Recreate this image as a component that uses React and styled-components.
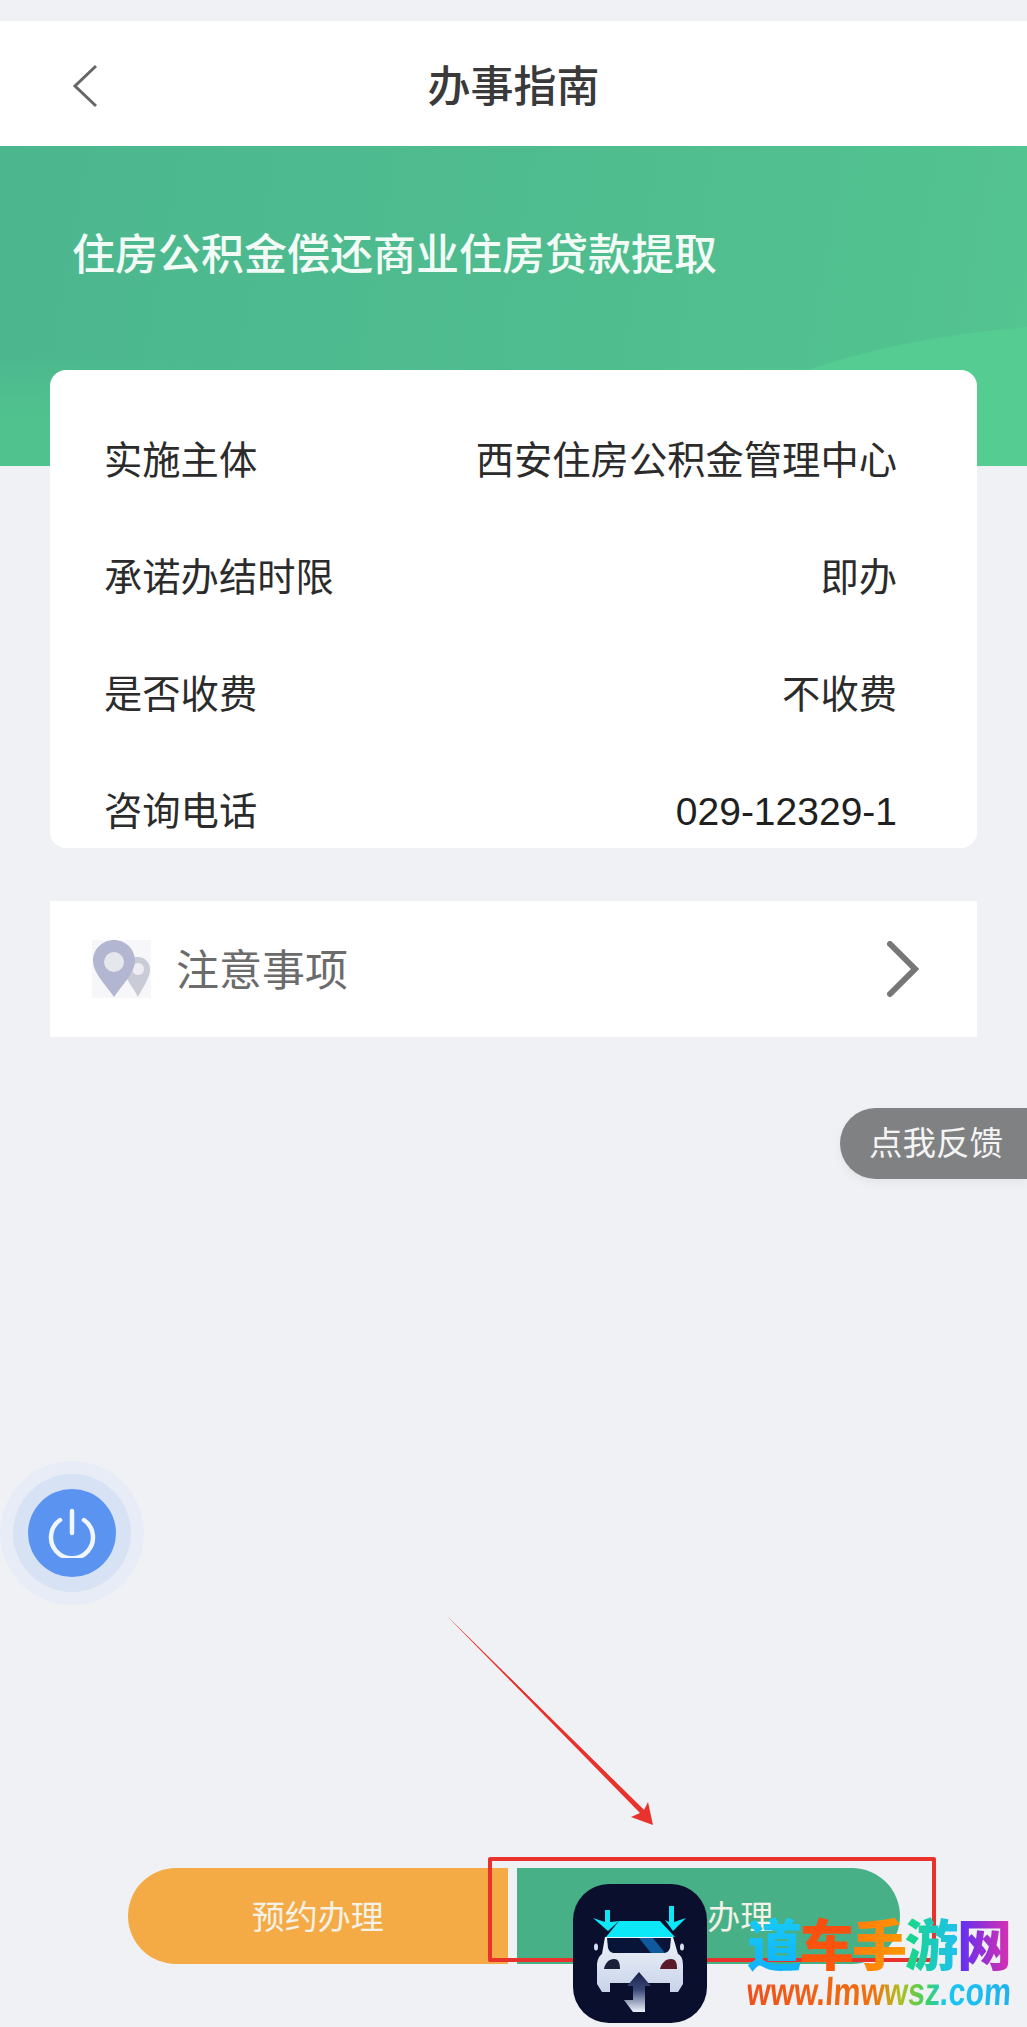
import React from 'react';
import styled, { createGlobalStyle } from 'styled-components';

const GlobalStyle = createGlobalStyle`
  html, body {
    margin: 0;
    padding: 0;
    background: #eff1f5;
  }
  * {
    box-sizing: border-box;
  }
`;

const Page = styled.div`
  position: relative;
  width: 1027px;
  height: 2027px;
  padding-top: 21px;
  overflow: hidden;
  background: #eff1f5;
  font-family: "Noto Sans CJK SC", "Liberation Sans", sans-serif;
  color: #333;
`;

// Top bar
const Header = styled.header`
  display: flex;
  align-items: center;
  justify-content: center;
  position: relative;
  height: 125px;
  background: #fff;
`;

const BackIcon = styled.svg`
  position: absolute;
  left: 72px;
  top: 43px;
`;

const Title = styled.h1`
  margin: 0;
  font-size: 43px;
  font-weight: 500;
  line-height: 1;
  color: #3a3a3a;
`;

// Green banner
const Hero = styled.section`
  height: 320px;
  padding: 82px 0 0 72px;
  background:
    radial-gradient(ellipse 460px 145px at 1150px 320px, #55cd92 99%, transparent 100%),
    radial-gradient(ellipse 480px 130px at 60px 340px, #50c28e 55%, transparent 100%),
    linear-gradient(100deg, #4cb78f 0%, #50bd8f 60%, #54c491 100%);
`;

const HeroTitle = styled.h2`
  margin: 0;
  font-size: 43px;
  font-weight: 500;
  line-height: 46px;
  color: #f2fbf6;
  white-space: nowrap;
`;

// Info card, its last row is cut off at the bottom edge
const Card = styled.section`
  height: 478px;
  margin: -96px 50px 0;
  padding: 33px 80px 0 54px;
  overflow: hidden;
  background: #fff;
  border-radius: 16px;
  position: relative;
`;

const Row = styled.div`
  display: flex;
  align-items: center;
  justify-content: space-between;
  height: 117px;
  padding-bottom: 8px;
  font-size: 38.3px;
  color: #2b2b2b;
`;

const Phone = styled.span`
  font-family: "Liberation Sans", sans-serif;
  font-size: 39px;
  color: #1f1f1f;
`;

const Notice = styled.section`
  display: flex;
  align-items: center;
  height: 136px;
  margin: 53px 50px 0;
  padding: 0 58px 0 42px;
  background: #fff;
`;

const NoticeText = styled.span`
  flex: 1;
  margin-left: 25px;
  padding-bottom: 4px;
  font-size: 43px;
  color: #6b6b6b;
`;

// Bottom buttons
const Actions = styled.div`
  display: flex;
  gap: 9px;
  margin: 831px 127px 0 128px;
`;

const ActionButton = styled.button`
  flex: 1;
  height: 96px;
  border: 0;
  padding: 0 ${(p) => (p.$tone === 'green' ? '4px' : '0')} 3px 0;
  font: inherit;
  font-size: 33px;
  color: #f4f1e6;
  background: ${(p) => (p.$tone === 'green' ? '#47b087' : '#f4ab45')};
  border-radius: ${(p) => (p.$tone === 'green' ? '0 48px 48px 0' : '48px 0 0 48px')};
`;

// The first two characters of the green button sit under the app logo
const CoveredText = styled.span`
  margin-right: 2px;
`;

// Floating parts
const Feedback = styled.div`
  position: absolute;
  right: 0;
  top: 1108px;
  width: 187px;
  height: 71px;
  padding: 0 0 6px 29px;
  display: flex;
  align-items: center;
  font-size: 33.5px;
  color: #f4f4f4;
  background: #808183;
  border-radius: 36px 0 0 36px;
  box-shadow: 0 4px 10px rgba(0, 0, 0, 0.05);
`;

const PowerButton = styled.div`
  position: absolute;
  left: 28px;
  top: 1489px;
  width: 88px;
  height: 88px;
  display: flex;
  align-items: center;
  justify-content: center;
  border-radius: 50%;
  background: #5a94f0;
  box-shadow: 0 0 0 15px #d8e2f5, 0 0 0 28px #e8ecf6;
`;

const ArrowMark = styled.svg`
  position: absolute;
  left: 440px;
  top: 1610px;
`;

const RedFrame = styled.div`
  position: absolute;
  left: 488px;
  top: 1857px;
  width: 448px;
  height: 105px;
  border: 4px solid #e8322b;
  border-radius: 2px;
`;

const AppLogo = styled.svg`
  position: absolute;
  left: 573px;
  top: 1884px;
`;

const Watermark = styled.div`
  position: absolute;
  left: 747px;
  top: 1906px;
  width: 275px;
`;

const BrandLine = styled.div`
  display: flex;
  font-size: 55px;
  font-weight: 900;
  line-height: 70px;
  letter-spacing: -2.5px;
  white-space: nowrap;
`;

const BrandChar = styled.span`
  background: linear-gradient(${(p) => p.$angle || '180deg'}, ${(p) => p.$from}, ${(p) => p.$to});
  -webkit-background-clip: text;
  background-clip: text;
  color: transparent;
`;

const BrandUrl = styled.div`
  display: inline-block;
  margin-top: -4px;
  font-family: "Liberation Sans", sans-serif;
  font-size: 39px;
  font-weight: 700;
  line-height: 40px;
  white-space: nowrap;
  transform: scaleX(0.78) skewX(-5deg);
  transform-origin: left center;
  background: linear-gradient(90deg, #f0501a 0%, #f0700f 48%, #b0c020 58%, #40d060 68%, #18c8f0 75%, #20b0f0 100%);
  -webkit-background-clip: text;
  background-clip: text;
  color: transparent;
`;

const rows = [
  { label: '实施主体', value: '西安住房公积金管理中心' },
  { label: '承诺办结时限', value: '即办' },
  { label: '是否收费', value: '不收费' },
  { label: '咨询电话', value: <Phone>029-12329-1</Phone> },
];

const brandChars = [
  { ch: '道', from: '#18d0f8', to: '#10b0f8' },
  { ch: '车', from: '#f44a14', to: '#ff5a08' },
  { ch: '手', from: '#ff7a10', to: '#ff9a00', angle: '100deg' },
  { ch: '游', from: '#18d880', to: '#20c0f0', angle: '90deg' },
  { ch: '网', from: '#5a30f5', to: '#d830b0', angle: '90deg' },
];

const PinIcon = () => (
  <svg width="59" height="58" viewBox="0 0 59 58">
    <rect width="59" height="58" fill="#f7f7f9" />
    <path
      d="M46 17c7 0 12 5.500 12 12.500C58 38 51 47 46 57c-3-6-9-14-12-20l2-20c3 0 6 0 10 0z"
      fill="#c9cbd6"
    />
    <circle cx="46" cy="29" r="6" fill="#eeeef2" />
    <path d="M22 0C33.500 0 43 9 43 21C43 33 30 45 22 57C14 45 1 33 1 21C1 9 10.500 0 22 0z" fill="#b3b6d1" />
    <circle cx="22" cy="22" r="10" fill="#e6e7ec" />
  </svg>
);

const CarLogo = () => (
  <AppLogo width="134" height="139" viewBox="0 0 134 139">
    <defs>
      <linearGradient id="stemFill" x1="0" y1="0" x2="0" y2="1">
        <stop offset="0" stopColor="#16204a" />
        <stop offset="0.45" stopColor="#3c4a78" />
        <stop offset="1" stopColor="#eef2fa" />
      </linearGradient>
      <linearGradient id="bodyFill" x1="0" y1="0" x2="0" y2="1">
        <stop offset="0" stopColor="#eef2f8" />
        <stop offset="1" stopColor="#c8d4ea" />
      </linearGradient>
    </defs>
    <rect width="134" height="139" rx="36" fill="#0a0f2e" />
    <polygon points="32,26 37,26 37,38 46,37 35,47 20,34 32,38" fill="#0ce8f8" />
    <polygon points="96,22 101,22 101,38 113,34 100,47 92,36 96,38" fill="#0ce8f8" />
    <path
      d="M32 53H100L105 70C109 72 110 76 110 82V100L105 108H97V99H37V108H29L24 100V82C24 76 26 72 29 70z"
      fill="url(#bodyFill)"
    />
    <polygon points="46,37 87,37 102,53 33,53" fill="#0ce8f8" />
    <path d="M34 54H98L97 64C96 67 94 69 90 69H42C38 69 36 67 35 64z" fill="#081438" />
    <polygon points="66,54 80,54 92,69 78,69" fill="#0f5a9c" />
    <ellipse cx="23" cy="63" rx="2" ry="3.500" fill="#d5deee" />
    <ellipse cx="109" cy="63" rx="2" ry="3.500" fill="#d5deee" />
    <path d="M31 85C32 79 36 75 41 75C46 75 47 80 47 85z" fill="#1a2038" />
    <path d="M87 85C88 80 92 75 98 75C103 75 104 79 104 85z" fill="#5a1a2a" />
    <polygon points="66,88 78,102 72,102 72,128 60,128 51,116 60,116 60,102 54,102" fill="url(#stemFill)" />
  </AppLogo>
);

const App = () => (
  <Page>
    <GlobalStyle />
    <Header>
      <BackIcon width="26" height="44" viewBox="0 0 26 44">
        <path d="M24 2L3 22L24 42" fill="none" stroke="#666" strokeWidth="3" />
      </BackIcon>
      <Title>办事指南</Title>
    </Header>
    <Hero>
      <HeroTitle>住房公积金偿还商业住房贷款提取</HeroTitle>
    </Hero>
    <Card>
      {rows.map((row) => (
        <Row key={row.label}>
          <span>{row.label}</span>
          <span>{row.value}</span>
        </Row>
      ))}
    </Card>
    <Notice>
      <PinIcon />
      <NoticeText>注意事项</NoticeText>
      <svg width="32" height="56" viewBox="0 0 32 56">
        <path d="M3 3L28 28L3 53" fill="none" stroke="#777" strokeWidth="6" strokeLinecap="round" />
      </svg>
    </Notice>
    <Actions>
      <ActionButton>预约办理</ActionButton>
      <ActionButton $tone="green">
        <CoveredText>在线</CoveredText>办理
      </ActionButton>
    </Actions>

    <Feedback>点我反馈</Feedback>
    <PowerButton>
      <svg width="50" height="50" viewBox="0 0 50 50">
        <path
          d="M13 12A21 21 0 1 0 37 12M25 3V25"
          fill="none"
          stroke="#f2f6fe"
          strokeWidth="4.500"
          strokeLinecap="round"
        />
      </svg>
    </PowerButton>
    <ArrowMark width="220" height="222" viewBox="0 0 220 222">
      <polygon points="7,6 204,200 208,192 213,215 191,207 200,203" fill="#e8322b" />
      <polygon points="7,6 205,201 202,204" fill="#e8322b" />
    </ArrowMark>
    <RedFrame />
    <CarLogo />
    <Watermark>
      <BrandLine>
        {brandChars.map((c) => (
          <BrandChar key={c.ch} $from={c.from} $to={c.to} $angle={c.angle}>
            {c.ch}
          </BrandChar>
        ))}
      </BrandLine>
      <BrandUrl>www.lmwwsz.com</BrandUrl>
    </Watermark>
  </Page>
);

export default App;
